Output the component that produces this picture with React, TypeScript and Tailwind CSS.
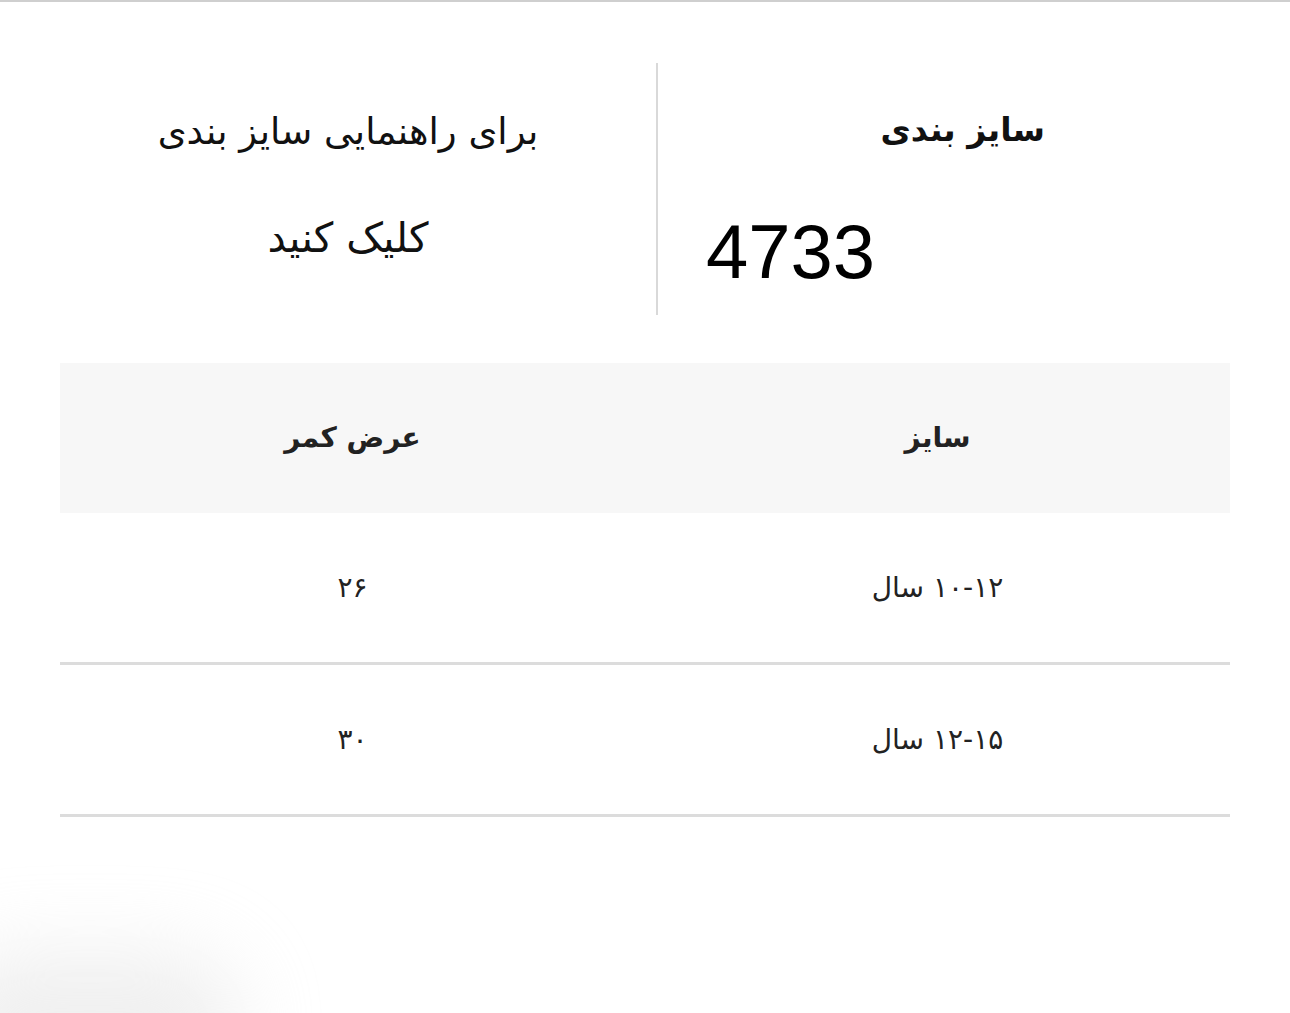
import React from "react";

const fa = { fontFamily: '"DejaVu Sans", "Noto Sans", sans-serif' };

export default function App() {
  const rows = [
    { size: "۱۰-۱۲ سال", waist: "۲۶" },
    { size: "۱۲-۱۵ سال", waist: "۳۰" },
  ];
  return (
    <div className="relative w-[1290px] h-[1013px] overflow-hidden bg-white border-t-2 border-[#cfcfcf]" style={fa}>
      <div dir="rtl" className="px-[60px] pt-[61px]">
        <div className="flex h-[252px]">
          <div className="w-[572px] flex flex-col pr-[185px] pl-[48px]">
            <div className="text-right pt-[50px] text-[33px] font-bold text-[#111] leading-none" style={fa}>سایز بندی</div>
            <div dir="ltr" className="text-left mt-[68px] text-[76px] leading-none text-black" style={{ fontFamily: '"Liberation Sans", Arial, sans-serif' }}>4733</div>
          </div>
          <div className="w-[2px] bg-[#d9d9d9]" />
          <div className="flex-1 flex flex-col items-center pr-[20px] pt-[50px] text-[37px] text-[#111] leading-none">
            <div>برای راهنمایی سایز بندی</div>
            <div className="mt-[68px] text-[41px]">کلیک کنید</div>
          </div>
        </div>
        <div className="mt-[48px]">
          <div className="grid grid-cols-2 h-[150px] bg-[#f7f7f7] items-center text-center text-[28px] font-bold text-[#222]">
            <div>سایز</div>
            <div>عرض کمر</div>
          </div>
          {rows.map((r, i) => (
            <div key={i} className="grid grid-cols-2 h-[152px] border-b-[3px] border-[#dcdcdc] items-center text-center text-[28px] text-[#222]">
              <div>{r.size}</div>
              <div>{r.waist}</div>
            </div>
          ))}
        </div>
      </div>
      <div className="absolute left-[-60px] bottom-[-80px] w-[300px] h-[140px] rounded-full bg-[#e0e0e0] blur-[40px] opacity-50 pointer-events-none" />
    </div>
  );
}
